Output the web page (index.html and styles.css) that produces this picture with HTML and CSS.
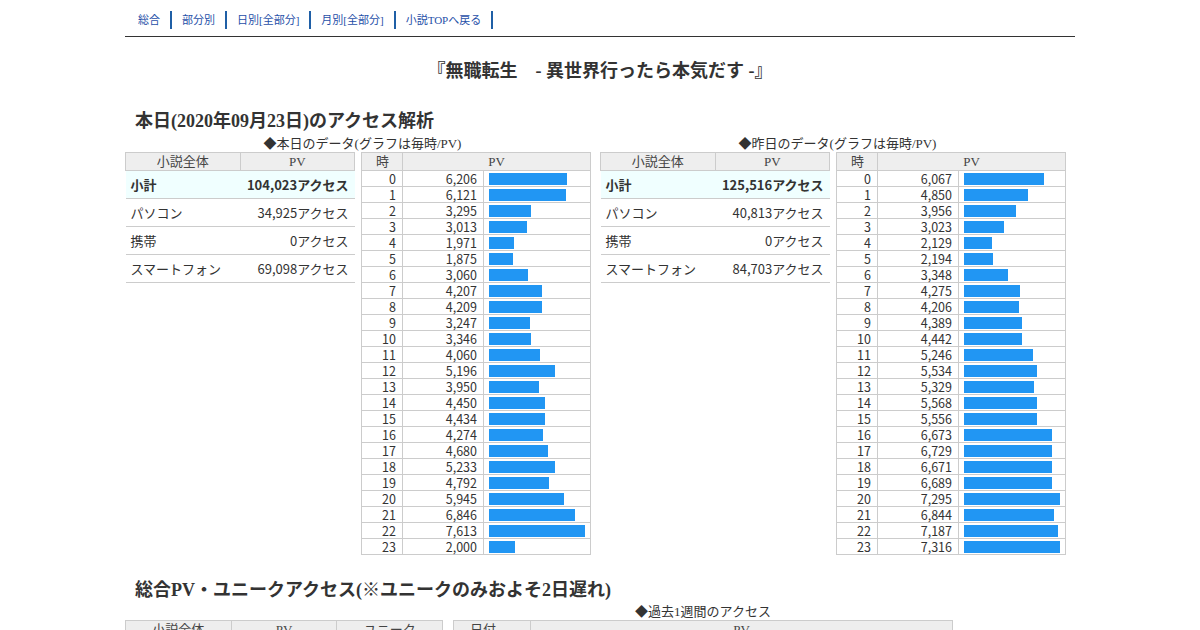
FILE: index.html
```html
<!DOCTYPE html>
<html lang="ja">
<head>
<meta charset="utf-8">
<title>アクセス解析</title>
<link rel="stylesheet" href="styles.css">
</head>
<body>
<div class="wrap">
  <div class="nav">
    <a href="#">総合</a><a href="#">部分別</a><a href="#">日別[全部分]</a><a href="#">月別[全部分]</a><a href="#">小説TOPへ戻る</a>
  </div>
  <h1 class="title">『無職転生　- 異世界行ったら本気だす -』</h1>

  <h2 class="heading">本日(2020年09月23日)のアクセス解析</h2>
  <div class="days">
    <div class="half">
      <p class="caption">◆本日のデータ(グラフは毎時/PV)</p>
      <div class="tables">
        <table class="summary">
          <tr><th>小説全体</th><th>PV</th></tr>
          <tr class="sub"><td>小計</td><td class="num">104,023アクセス</td></tr>
          <tr><td>パソコン</td><td class="num">34,925アクセス</td></tr>
          <tr><td>携帯</td><td class="num">0アクセス</td></tr>
          <tr><td>スマートフォン</td><td class="num">69,098アクセス</td></tr>
        </table>
        <table class="hourly">
          <colgroup><col class="c-hr"><col class="c-pv"><col class="c-bar"></colgroup>
          <tr><th class="h">時</th><th colspan="2">PV</th></tr>
          <tr><td class="hr">0</td><td class="pv">6,206</td><td class="bc"><span class="bar" style="width:78px"></span></td></tr>
          <tr><td class="hr">1</td><td class="pv">6,121</td><td class="bc"><span class="bar" style="width:77px"></span></td></tr>
          <tr><td class="hr">2</td><td class="pv">3,295</td><td class="bc"><span class="bar" style="width:42px"></span></td></tr>
          <tr><td class="hr">3</td><td class="pv">3,013</td><td class="bc"><span class="bar" style="width:38px"></span></td></tr>
          <tr><td class="hr">4</td><td class="pv">1,971</td><td class="bc"><span class="bar" style="width:25px"></span></td></tr>
          <tr><td class="hr">5</td><td class="pv">1,875</td><td class="bc"><span class="bar" style="width:24px"></span></td></tr>
          <tr><td class="hr">6</td><td class="pv">3,060</td><td class="bc"><span class="bar" style="width:39px"></span></td></tr>
          <tr><td class="hr">7</td><td class="pv">4,207</td><td class="bc"><span class="bar" style="width:53px"></span></td></tr>
          <tr><td class="hr">8</td><td class="pv">4,209</td><td class="bc"><span class="bar" style="width:53px"></span></td></tr>
          <tr><td class="hr">9</td><td class="pv">3,247</td><td class="bc"><span class="bar" style="width:41px"></span></td></tr>
          <tr><td class="hr">10</td><td class="pv">3,346</td><td class="bc"><span class="bar" style="width:42px"></span></td></tr>
          <tr><td class="hr">11</td><td class="pv">4,060</td><td class="bc"><span class="bar" style="width:51px"></span></td></tr>
          <tr><td class="hr">12</td><td class="pv">5,196</td><td class="bc"><span class="bar" style="width:66px"></span></td></tr>
          <tr><td class="hr">13</td><td class="pv">3,950</td><td class="bc"><span class="bar" style="width:50px"></span></td></tr>
          <tr><td class="hr">14</td><td class="pv">4,450</td><td class="bc"><span class="bar" style="width:56px"></span></td></tr>
          <tr><td class="hr">15</td><td class="pv">4,434</td><td class="bc"><span class="bar" style="width:56px"></span></td></tr>
          <tr><td class="hr">16</td><td class="pv">4,274</td><td class="bc"><span class="bar" style="width:54px"></span></td></tr>
          <tr><td class="hr">17</td><td class="pv">4,680</td><td class="bc"><span class="bar" style="width:59px"></span></td></tr>
          <tr><td class="hr">18</td><td class="pv">5,233</td><td class="bc"><span class="bar" style="width:66px"></span></td></tr>
          <tr><td class="hr">19</td><td class="pv">4,792</td><td class="bc"><span class="bar" style="width:60px"></span></td></tr>
          <tr><td class="hr">20</td><td class="pv">5,945</td><td class="bc"><span class="bar" style="width:75px"></span></td></tr>
          <tr><td class="hr">21</td><td class="pv">6,846</td><td class="bc"><span class="bar" style="width:86px"></span></td></tr>
          <tr><td class="hr">22</td><td class="pv">7,613</td><td class="bc"><span class="bar" style="width:96px"></span></td></tr>
          <tr><td class="hr">23</td><td class="pv">2,000</td><td class="bc"><span class="bar" style="width:26px"></span></td></tr>
        </table>
      </div>
    </div>
    <div class="half">
      <p class="caption">◆昨日のデータ(グラフは毎時/PV)</p>
      <div class="tables">
        <table class="summary">
          <tr><th>小説全体</th><th>PV</th></tr>
          <tr class="sub"><td>小計</td><td class="num">125,516アクセス</td></tr>
          <tr><td>パソコン</td><td class="num">40,813アクセス</td></tr>
          <tr><td>携帯</td><td class="num">0アクセス</td></tr>
          <tr><td>スマートフォン</td><td class="num">84,703アクセス</td></tr>
        </table>
        <table class="hourly">
          <colgroup><col class="c-hr"><col class="c-pv"><col class="c-bar"></colgroup>
          <tr><th class="h">時</th><th colspan="2">PV</th></tr>
          <tr><td class="hr">0</td><td class="pv">6,067</td><td class="bc"><span class="bar" style="width:80px"></span></td></tr>
          <tr><td class="hr">1</td><td class="pv">4,850</td><td class="bc"><span class="bar" style="width:64px"></span></td></tr>
          <tr><td class="hr">2</td><td class="pv">3,956</td><td class="bc"><span class="bar" style="width:52px"></span></td></tr>
          <tr><td class="hr">3</td><td class="pv">3,023</td><td class="bc"><span class="bar" style="width:40px"></span></td></tr>
          <tr><td class="hr">4</td><td class="pv">2,129</td><td class="bc"><span class="bar" style="width:28px"></span></td></tr>
          <tr><td class="hr">5</td><td class="pv">2,194</td><td class="bc"><span class="bar" style="width:29px"></span></td></tr>
          <tr><td class="hr">6</td><td class="pv">3,348</td><td class="bc"><span class="bar" style="width:44px"></span></td></tr>
          <tr><td class="hr">7</td><td class="pv">4,275</td><td class="bc"><span class="bar" style="width:56px"></span></td></tr>
          <tr><td class="hr">8</td><td class="pv">4,206</td><td class="bc"><span class="bar" style="width:55px"></span></td></tr>
          <tr><td class="hr">9</td><td class="pv">4,389</td><td class="bc"><span class="bar" style="width:58px"></span></td></tr>
          <tr><td class="hr">10</td><td class="pv">4,442</td><td class="bc"><span class="bar" style="width:58px"></span></td></tr>
          <tr><td class="hr">11</td><td class="pv">5,246</td><td class="bc"><span class="bar" style="width:69px"></span></td></tr>
          <tr><td class="hr">12</td><td class="pv">5,534</td><td class="bc"><span class="bar" style="width:73px"></span></td></tr>
          <tr><td class="hr">13</td><td class="pv">5,329</td><td class="bc"><span class="bar" style="width:70px"></span></td></tr>
          <tr><td class="hr">14</td><td class="pv">5,568</td><td class="bc"><span class="bar" style="width:73px"></span></td></tr>
          <tr><td class="hr">15</td><td class="pv">5,556</td><td class="bc"><span class="bar" style="width:73px"></span></td></tr>
          <tr><td class="hr">16</td><td class="pv">6,673</td><td class="bc"><span class="bar" style="width:88px"></span></td></tr>
          <tr><td class="hr">17</td><td class="pv">6,729</td><td class="bc"><span class="bar" style="width:88px"></span></td></tr>
          <tr><td class="hr">18</td><td class="pv">6,671</td><td class="bc"><span class="bar" style="width:88px"></span></td></tr>
          <tr><td class="hr">19</td><td class="pv">6,689</td><td class="bc"><span class="bar" style="width:88px"></span></td></tr>
          <tr><td class="hr">20</td><td class="pv">7,295</td><td class="bc"><span class="bar" style="width:96px"></span></td></tr>
          <tr><td class="hr">21</td><td class="pv">6,844</td><td class="bc"><span class="bar" style="width:90px"></span></td></tr>
          <tr><td class="hr">22</td><td class="pv">7,187</td><td class="bc"><span class="bar" style="width:94px"></span></td></tr>
          <tr><td class="hr">23</td><td class="pv">7,316</td><td class="bc"><span class="bar" style="width:96px"></span></td></tr>
        </table>
      </div>
    </div>
  </div>

  <h2 class="heading heading2">総合PV・ユニークアクセス(※ユニークのみおよそ2日遅れ)</h2>
  <p class="caption caption-week">◆過去1週間のアクセス</p>
  <div class="totals">
    <table class="total-table">
      <tr><th>小説全体</th><th>PV</th><th>ユニーク</th></tr>
    </table>
    <table class="week-table">
      <tr><th class="date">日付</th><th>PV</th></tr>
    </table>
  </div>
</div>
</body>
</html>
```
FILE: styles.css
```css
body {
  margin: 0;
  background: #fff;
  color: #333;
  font-family: "Liberation Serif", "Noto Sans CJK JP", serif;
}
.wrap {
  width: 950px;
  margin: 0 auto;
}
.nav {
  padding: 11px 0 7px 3px;
  border-bottom: 1px solid #333;
  display: flex;
}
.nav a {
  display: block;
  font-size: 11px;
  line-height: 18px;
  padding: 0 10px;
  border-right: 2px solid #1f5fa6;
  color: #1f4fa8;
  text-decoration: none;
}
.title {
  margin: 22px 0 0;
  font-size: 18px;
  line-height: 24px;
  text-align: center;
  font-weight: bold;
  color: #333;
}
.heading {
  margin: 26px 0 0 10px;
  font-size: 18px;
  line-height: 24px;
  font-weight: bold;
  color: #333;
}
.days {
  display: flex;
}
.half {
  width: 475px;
}
.caption {
  margin: 2px 0 0;
  font-size: 13px;
  line-height: 17px;
  text-align: center;
  color: #333;
}
.tables {
  display: flex;
  gap: 6px;
  align-items: flex-start;
}
table {
  border-collapse: collapse;
}
th {
  background: #eee;
  border: 1px solid #ccc;
  font-weight: normal;
  font-size: 13px;
  line-height: 17px;
  padding: 0;
  color: #444;
}
td {
  font-family: "Noto Sans CJK JP", sans-serif;
  color: #333;
  padding: 0;
}
.summary {
  width: 230px;
  table-layout: fixed;
}
.summary th {
  width: 50%;
  text-align: center;
}
.summary td {
  font-size: 13px;
  line-height: 27px;
  border-bottom: 1px solid #ccc;
  padding: 0 5px;
}
.summary td.num {
  text-align: right;
  padding-right: 6px;
}
.summary .sub td {
  background: #f0ffff;
  font-weight: bold;
}
.hourly {
  width: 229px;
  table-layout: fixed;
}
.c-hr { width: 41px; }
.c-pv { width: 81px; }
.c-bar { width: 107px; }
.hourly th {
  text-align: center;
}
.hourly th.h {
  text-align: left;
  padding-left: 14px;
}
.hourly td {
  border: 1px solid #ccc;
  font-size: 12.5px;
  line-height: 15px;
}
.hourly td.hr {
  text-align: right;
  padding-right: 6px;
}
.hourly td.pv {
  text-align: right;
  padding-right: 6px;
}
.hourly td.bc {
  padding: 0 5px;
}
.bar {
  display: block;
  height: 12px;
  margin: 2px 0 1px;
  background: #2196f3;
}
.heading2 {
  margin-top: 23px;
}
.caption-week {
  margin: 2px 0 0 328px;
  width: 500px;
  line-height: 16px;
}
.totals {
  display: flex;
  gap: 10px;
}
.total-table {
  width: 318px;
  table-layout: fixed;
}
.week-table {
  width: 500px;
}
.week-table th.date {
  width: 60px;
  text-align: left;
  padding-left: 16px;
}
```
